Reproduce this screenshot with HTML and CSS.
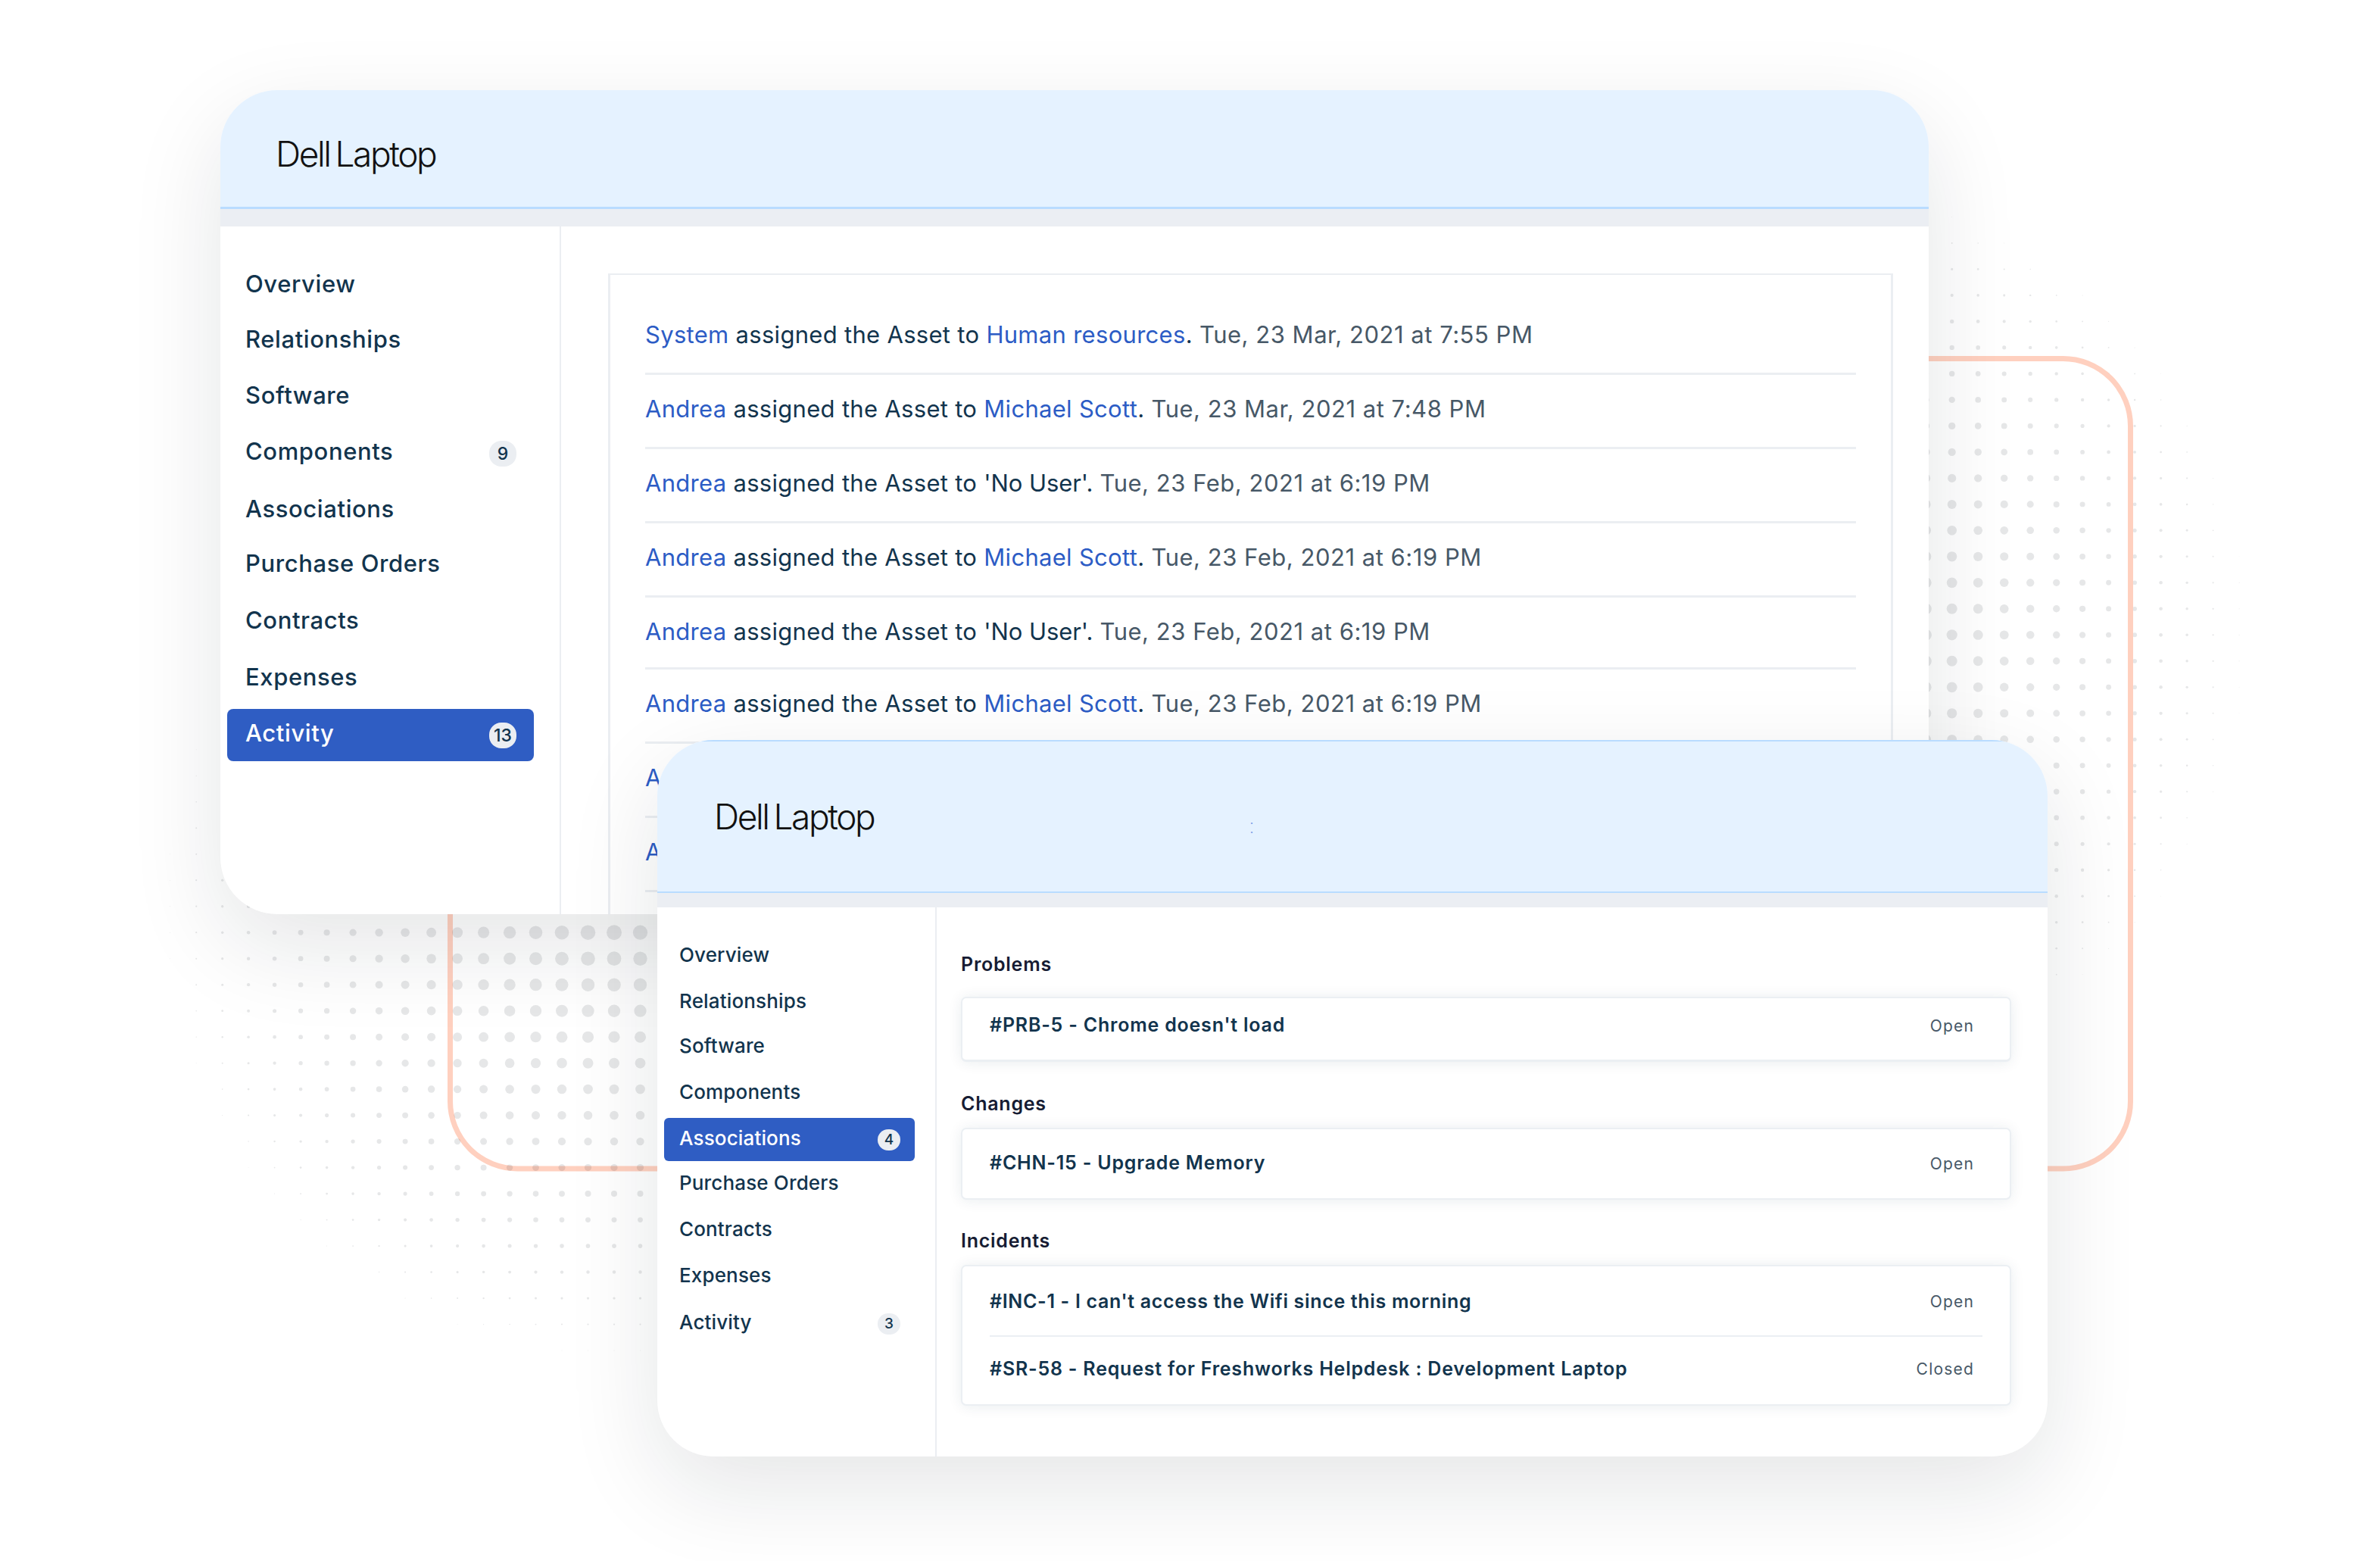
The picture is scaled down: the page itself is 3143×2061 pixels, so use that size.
FILE: index.html
```html
<!DOCTYPE html>
<html lang="en">
<head>
<meta charset="utf-8">
<title>Dell Laptop</title>
<link rel="stylesheet" href="styles.css">
</head>
<body>
<main class="stage">
  <svg class="backdrop" width="3143" height="2061" viewBox="0 0 3143 2061" aria-hidden="true">
    <g id="dots-right" class="dots"></g>
    <rect class="frame" x="594.5" y="473.5" width="2219" height="1069.5" rx="89" ry="89"/>
    <g id="dots-left" class="dots"></g>
  </svg>

  <section class="window window-activity">
    <header class="titlebar"><h1 class="title">Dell Laptop</h1></header>
    <div class="body">
      <nav class="sidebar">
        <a class="item">Overview</a>
        <a class="item">Relationships</a>
        <a class="item">Software</a>
        <a class="item">Components<span class="badge">9</span></a>
        <a class="item">Associations</a>
        <a class="item">Purchase Orders</a>
        <a class="item">Contracts</a>
        <a class="item">Expenses</a>
        <a class="item active">Activity<span class="badge">13</span></a>
      </nav>
      <div class="content">
        <ul class="feed">
          <li class="entry"><p><a>System</a> assigned the Asset to <a>Human resources</a>. <time>Tue, 23 Mar, 2021 at 7:55 PM</time></p></li>
          <li class="entry"><p><a>Andrea</a> assigned the Asset to <a>Michael Scott</a>. <time>Tue, 23 Mar, 2021 at 7:48 PM</time></p></li>
          <li class="entry"><p><a>Andrea</a> assigned the Asset to <span class="nobody">'No User'.</span> <time>Tue, 23 Feb, 2021 at 6:19 PM</time></p></li>
          <li class="entry"><p><a>Andrea</a> assigned the Asset to <a>Michael Scott</a>. <time>Tue, 23 Feb, 2021 at 6:19 PM</time></p></li>
          <li class="entry tight"><p><a>Andrea</a> assigned the Asset to <span class="nobody">'No User'.</span> <time>Tue, 23 Feb, 2021 at 6:19 PM</time></p></li>
          <li class="entry"><p><a>Andrea</a> assigned the Asset to <a>Michael Scott</a>. <time>Tue, 23 Feb, 2021 at 6:19 PM</time></p></li>
          <li class="entry"><p><a>A</a></p></li>
          <li class="entry"><p><a>A</a></p></li>
        </ul>
      </div>
    </div>
  </section>

  <section class="window window-associations">
    <header class="titlebar"><h1 class="title">Dell Laptop</h1><span class="mark">:</span></header>
    <div class="body">
      <nav class="sidebar">
        <a class="item">Overview</a>
        <a class="item">Relationships</a>
        <a class="item">Software</a>
        <a class="item">Components</a>
        <a class="item active">Associations<span class="badge">4</span></a>
        <a class="item">Purchase Orders</a>
        <a class="item">Contracts</a>
        <a class="item">Expenses</a>
        <a class="item">Activity<span class="badge">3</span></a>
      </nav>
      <div class="content">
        <h2 class="heading">Problems</h2>
        <ul class="tickets problems">
          <li class="ticket"><b>#PRB-5 - Chrome doesn't load</b><span class="status">Open</span></li>
        </ul>
        <h2 class="heading">Changes</h2>
        <ul class="tickets changes">
          <li class="ticket"><b>#CHN-15 - Upgrade Memory</b><span class="status">Open</span></li>
        </ul>
        <h2 class="heading">Incidents</h2>
        <ul class="tickets incidents">
          <li class="ticket"><b>#INC-1 - I can't access the Wifi since this morning</b><span class="status">Open</span></li>
          <li class="ticket"><b>#SR-58 - Request for Freshworks Helpdesk : Development Laptop</b><span class="status">Closed</span></li>
        </ul>
      </div>
    </div>
  </section>
</main>
<script src="dots.js"></script>
</body>
</html>
```
FILE: styles.css
```css
* { box-sizing: border-box; margin: 0; padding: 0; }

body {
  background: #fff;
  font-family: Inter, "Liberation Sans", sans-serif;
  color: #12344d;
}

ul { list-style: none; }

.stage {
  position: relative;
  width: 3143px;
  height: 2061px;
  overflow: hidden;
}

.backdrop { display: block; }
.dots { fill: rgba(8, 16, 28, 0.1); }
.frame { fill: none; stroke: #ffd0bf; stroke-width: 7; }

/* Windows */
.window {
  position: absolute;
  display: flex;
  flex-direction: column;
  background: #fff;
  box-shadow: 0 42px 125px rgba(18, 24, 34, 0.11);
}

.window > .titlebar {
  display: flex;
  flex: none;
}

.title {
  font-size: 46px;
  line-height: 56px;
  font-weight: 300;
  letter-spacing: -2.4px;
  word-spacing: -3.7px;
  color: #111;
}

.body { flex: 1; display: flex; min-height: 0; overflow: hidden; }

.sidebar {
  flex: none;
  display: grid;
  align-content: start;
  border-right: 2px solid #ebeef2;
  font-weight: 500;
}

.item {
  display: flex;
  justify-content: space-between;
  align-items: center;
}

.badge {
  text-align: center;
  font-weight: 500;
  letter-spacing: 0;
  background: #ebeef2;
  color: #12344d;
}

.active { background: #2f5dc3; color: #fff; }

/* Activity window */
.window-activity {
  left: 291px;
  top: 119px;
  width: 2256px;
  height: 1088px;
  border-radius: 75px;
}

.window-activity .titlebar {
  height: 180px;
  padding: 56px 0 0 73px;
  border-radius: 75px 75px 0 0;
  background: linear-gradient(#e5f2ff 154px, #b9dcff 154px 157px, #ebeef3 157px);
}

.window-activity .body { border-radius: 0 0 75px 75px; }

.window-activity .sidebar {
  width: 450px;
  padding: 44px 34px 0 9px;
  grid-template-rows: 73px 74px 74px 76px 72px 75px 75px 74px 69px;
  font-size: 31px;
  letter-spacing: 0.6px;
}

.window-activity .item {
  height: 69px;
  padding: 0 23px 5px 24px;
  border-radius: 8px;
  line-height: 64px;
}

.window-activity .badge {
  width: 36px;
  height: 34px;
  margin-top: 5px;
  border-radius: 16px;
  font-size: 23px;
  line-height: 34px;
}

.window-activity .content { flex: 1; padding: 62px 47px 0 62px; }

.feed {
  height: 900px;
  padding: 34px 46px 0;
  border: 3px solid #ebeef2;
  border-top-width: 2px;
}

.entry {
  height: 98px;
  border-bottom: 3px solid #ebeef2;
  font-size: 31px;
  line-height: 90px;
  letter-spacing: 0.3px;
  white-space: nowrap;
}

.entry.tight { height: 95px; }
.entry a { color: #2c5cc5; }
.entry time { color: #475867; letter-spacing: 0.52px; }
.nobody { letter-spacing: -0.07px; }

/* Associations window */
.window-associations {
  left: 868px;
  top: 977px;
  width: 1836px;
  height: 946px;
  border-radius: 74px;
}

.window-associations .titlebar {
  height: 221px;
  padding: 73px 0 0 75px;
  border-radius: 74px 74px 0 0;
  background: linear-gradient(#b9dcff 2px, #e5f2ff 2px 200px, #b9dcff 200px 202px, #ebeef3 202px);
}

.mark {
  margin: 26px 0 0 495px;
  font-size: 27px;
  line-height: 30px;
  font-weight: 200;
  color: #7f9fe6;
}

.window-associations .body { border-radius: 0 0 74px 74px; }

.window-associations .sidebar {
  width: 369px;
  padding: 36px 27px 0 9px;
  grid-template-rows: 61px 59px 61px 61px 59px 61px 61px 61px 57px;
  font-size: 26px;
  letter-spacing: 0.15px;
}

.window-associations .item {
  height: 57px;
  padding: 0 19px 4px 20px;
  border-radius: 6px;
  line-height: 53px;
}

.window-associations .item:last-child { padding-bottom: 2px; }

.window-associations .badge {
  width: 30px;
  height: 28px;
  margin-top: 4px;
  border-radius: 14px;
  font-size: 19px;
  line-height: 28px;
}

.window-associations .content { flex: 1; padding: 60px 48px 0 32px; }

.heading {
  font-size: 25px;
  line-height: 30px;
  font-weight: 600;
  letter-spacing: 0.75px;
  color: #161c33;
}

.tickets {
  display: flex;
  flex-direction: column;
  padding: 0 36px;
  border: 2px solid #ebeff3;
  border-radius: 7px;
  background: #fff;
  box-shadow: 0 1px 18px rgba(18, 52, 77, 0.09);
}

.problems { height: 86px; margin: 28px 0 40px; padding-bottom: 11px; border-bottom-width: 3px; }
.changes { height: 95px; margin: 17px 0 39px; padding-bottom: 3px; }
.incidents { height: 186px; margin-top: 17px; }

.ticket {
  flex: 1;
  display: flex;
  justify-content: space-between;
  align-items: center;
  padding-right: 11px;
  font-size: 25px;
  letter-spacing: 0.79px;
  white-space: nowrap;
}

.ticket b { font-weight: 600; }

.ticket + .ticket { padding-bottom: 6px; border-top: 2px solid #ebeff3; }

.incidents .ticket { flex: none; height: 91px; }
.incidents .ticket:first-child { letter-spacing: 0.67px; }

.status {
  padding-top: 2px;
  font-size: 21px;
  letter-spacing: 1.2px;
  color: #475867;
}
```
FILE: dots.js
```js
// Halftone discs: dots on a square grid that shrink linearly towards the rim.
const PITCH = 34.49;
const RADIUS = 611;
const SLOPE = 0.0172;

function halftone(id, originX, originY, cx, cy, maxDot) {
  const group = document.getElementById(id);
  const startX = originX - Math.ceil((originX - cx + RADIUS) / PITCH) * PITCH;
  const startY = originY - Math.ceil((originY - cy + RADIUS) / PITCH) * PITCH;
  for (let y = startY; y < cy + RADIUS; y += PITCH) {
    for (let x = startX; x < cx + RADIUS; x += PITCH) {
      const r = Math.min((RADIUS - Math.hypot(x - cx, y - cy)) * SLOPE, maxDot);
      if (r < 0.4) continue;
      const dot = document.createElementNS('http://www.w3.org/2000/svg', 'circle');
      dot.setAttribute('cx', x.toFixed(1));
      dot.setAttribute('cy', y.toFixed(1));
      dot.setAttribute('r', r.toFixed(2));
      group.appendChild(dot);
    }
  }
}

halftone('dots-right', 2577.7, 838.3, 2379, 838, 10);
halftone('dots-left', 845.5, 1231.2, 806, 1200, 10);
```
